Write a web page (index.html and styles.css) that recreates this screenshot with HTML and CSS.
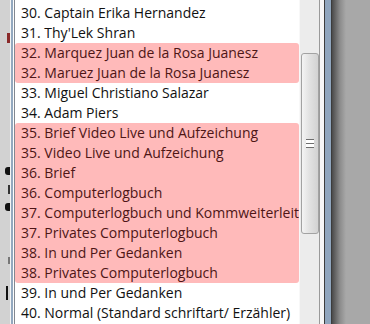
FILE: index.html
```html
<!DOCTYPE html>
<html lang="de">
  <head>
    <meta charset="UTF-8" />
    <title>Vorlagen</title>
    <link rel="stylesheet" href="styles.css">
  </head>
  <body>
    <div class="desk">
      <div class="behind">
        <span class="frag red"></span>
        <span class="frag g1"></span>
        <span class="frag g2"></span>
        <span class="frag g3"></span>
        <span class="frag g4"></span>
        <span class="frag g5"></span>
      </div>
      <div class="frameLeft"></div>
      <div class="listbox">
        <div class="list">
          <div class="row">30. Captain Erika Hernandez</div>
          <div class="row">31. Thy'Lek Shran</div>
          <div class="group">
            <div class="row">32. Marquez Juan de la Rosa Juanesz</div>
            <div class="row">32. Maruez Juan de la Rosa Juanesz</div>
          </div>
          <div class="row">33. Miguel Christiano Salazar</div>
          <div class="row">34. Adam Piers</div>
          <div class="group">
            <div class="row">35. Brief Video Live und Aufzeichung</div>
            <div class="row">35. Video Live und Aufzeichung</div>
            <div class="row">36. Brief</div>
            <div class="row">36. Computerlogbuch</div>
            <div class="row">37. Computerlogbuch und Kommweiterleitung</div>
            <div class="row">37. Privates Computerlogbuch</div>
            <div class="row">38. In und Per Gedanken</div>
            <div class="row">38. Privates Computerlogbuch</div>
          </div>
          <div class="row">39. In und Per Gedanken</div>
          <div class="row">40. Normal (Standard schriftart/ Erzähler)</div>
        </div>
        <div class="scrollbar">
          <div class="thumb">
            <span class="grip"></span>
          </div>
        </div>
      </div>
      <div class="frameRight"></div>
      <div class="shade"></div>
    </div>
  </body>
</html>
```

FILE: styles.css
```css
* {
  margin: 0;
  padding: 0;
  box-sizing: border-box;
}

body {
  width: 370px;
  height: 324px;
  overflow: hidden;
  background: #a8a8a8;
  font-family: "Open Sans", "Noto Sans", sans-serif;
}

.desk {
  display: flex;
  height: 324px;
}

/* bits of the window lying behind */
.behind {
  width: 10px;
  flex-shrink: 0;
  background: #d2d2d2;
  display: flex;
  flex-direction: column;
  align-items: flex-end;
}

.frag {
  display: block;
  width: 4px;
  height: 8px;
  background: #111;
}

.frag.red {
  margin-top: 33px;
  width: 3px;
  height: 10px;
  background: #8a2a2a;
}

.frag.g1 {
  margin-top: 124px;
  width: 5px;
  border-radius: 3px 0 0 3px;
}

.frag.g2 {
  margin-top: 10px;
  width: 2px;
  height: 9px;
  background: #333;
}

.frag.g3 {
  margin-top: 9px;
  width: 5px;
  border-radius: 3px 0 0 3px;
}

.frag.g4 {
  margin-top: 46px;
  width: 2px;
  height: 7px;
  background: #777;
}

.frag.g5 {
  margin-top: 22px;
  width: 2px;
  height: 14px;
  margin-right: 2px;
}

.frameLeft {
  width: 4px;
  flex-shrink: 0;
  border-left: 1px solid #f4f4f4;
  border-right: 1px solid #fdfdfd;
  background: #93a8bf;
}

.listbox {
  display: flex;
  width: 306px;
  flex-shrink: 0;
  background: #fff;
  border-left: 1px solid #828790;
  border-right: 1px solid #9a9a9a;
}

.list {
  width: 285px;
  padding-top: 3px;
  overflow: hidden;
  white-space: nowrap;
  font-size: 14px;
  color: #111;
}

.row {
  height: 20px;
  line-height: 20px;
  padding-left: 6px;
}

.group {
  background: #ffbaba;
  border-radius: 3px;
  color: #4e1616;
}

.scrollbar {
  width: 20px;
  background: #ececec;
  border-left: 1px solid #f8f8f8;
  padding-top: 53px;
  padding-left: 1px;
}

.thumb {
  width: 18px;
  height: 181px;
  border: 1px solid #a2a2a2;
  border-radius: 3px;
  background: linear-gradient(to right, #f4f4f4, #e2e2e2 45%, #d2d2d2);
  display: flex;
  justify-content: center;
  padding-top: 85px;
}

.grip {
  width: 8px;
  height: 9px;
  border-top: 1px solid #6e6e6e;
  border-bottom: 1px solid #6e6e6e;
  background: linear-gradient(#fff 0 3px, #6e6e6e 3px 4px, #fff 4px);
}

.frameRight {
  width: 12px;
  flex-shrink: 0;
  border-left: 4px solid #f6f6f6;
  border-right: 1px solid #3c3c3c;
  background: linear-gradient(to right, #3c3c3c 0 1px, #8fa5bd 1px);
}

.shade {
  flex: 1;
  background: linear-gradient(to right, #4a4a4a, #8c8c8c 8px, #a8a8a8 14px);
}
```
